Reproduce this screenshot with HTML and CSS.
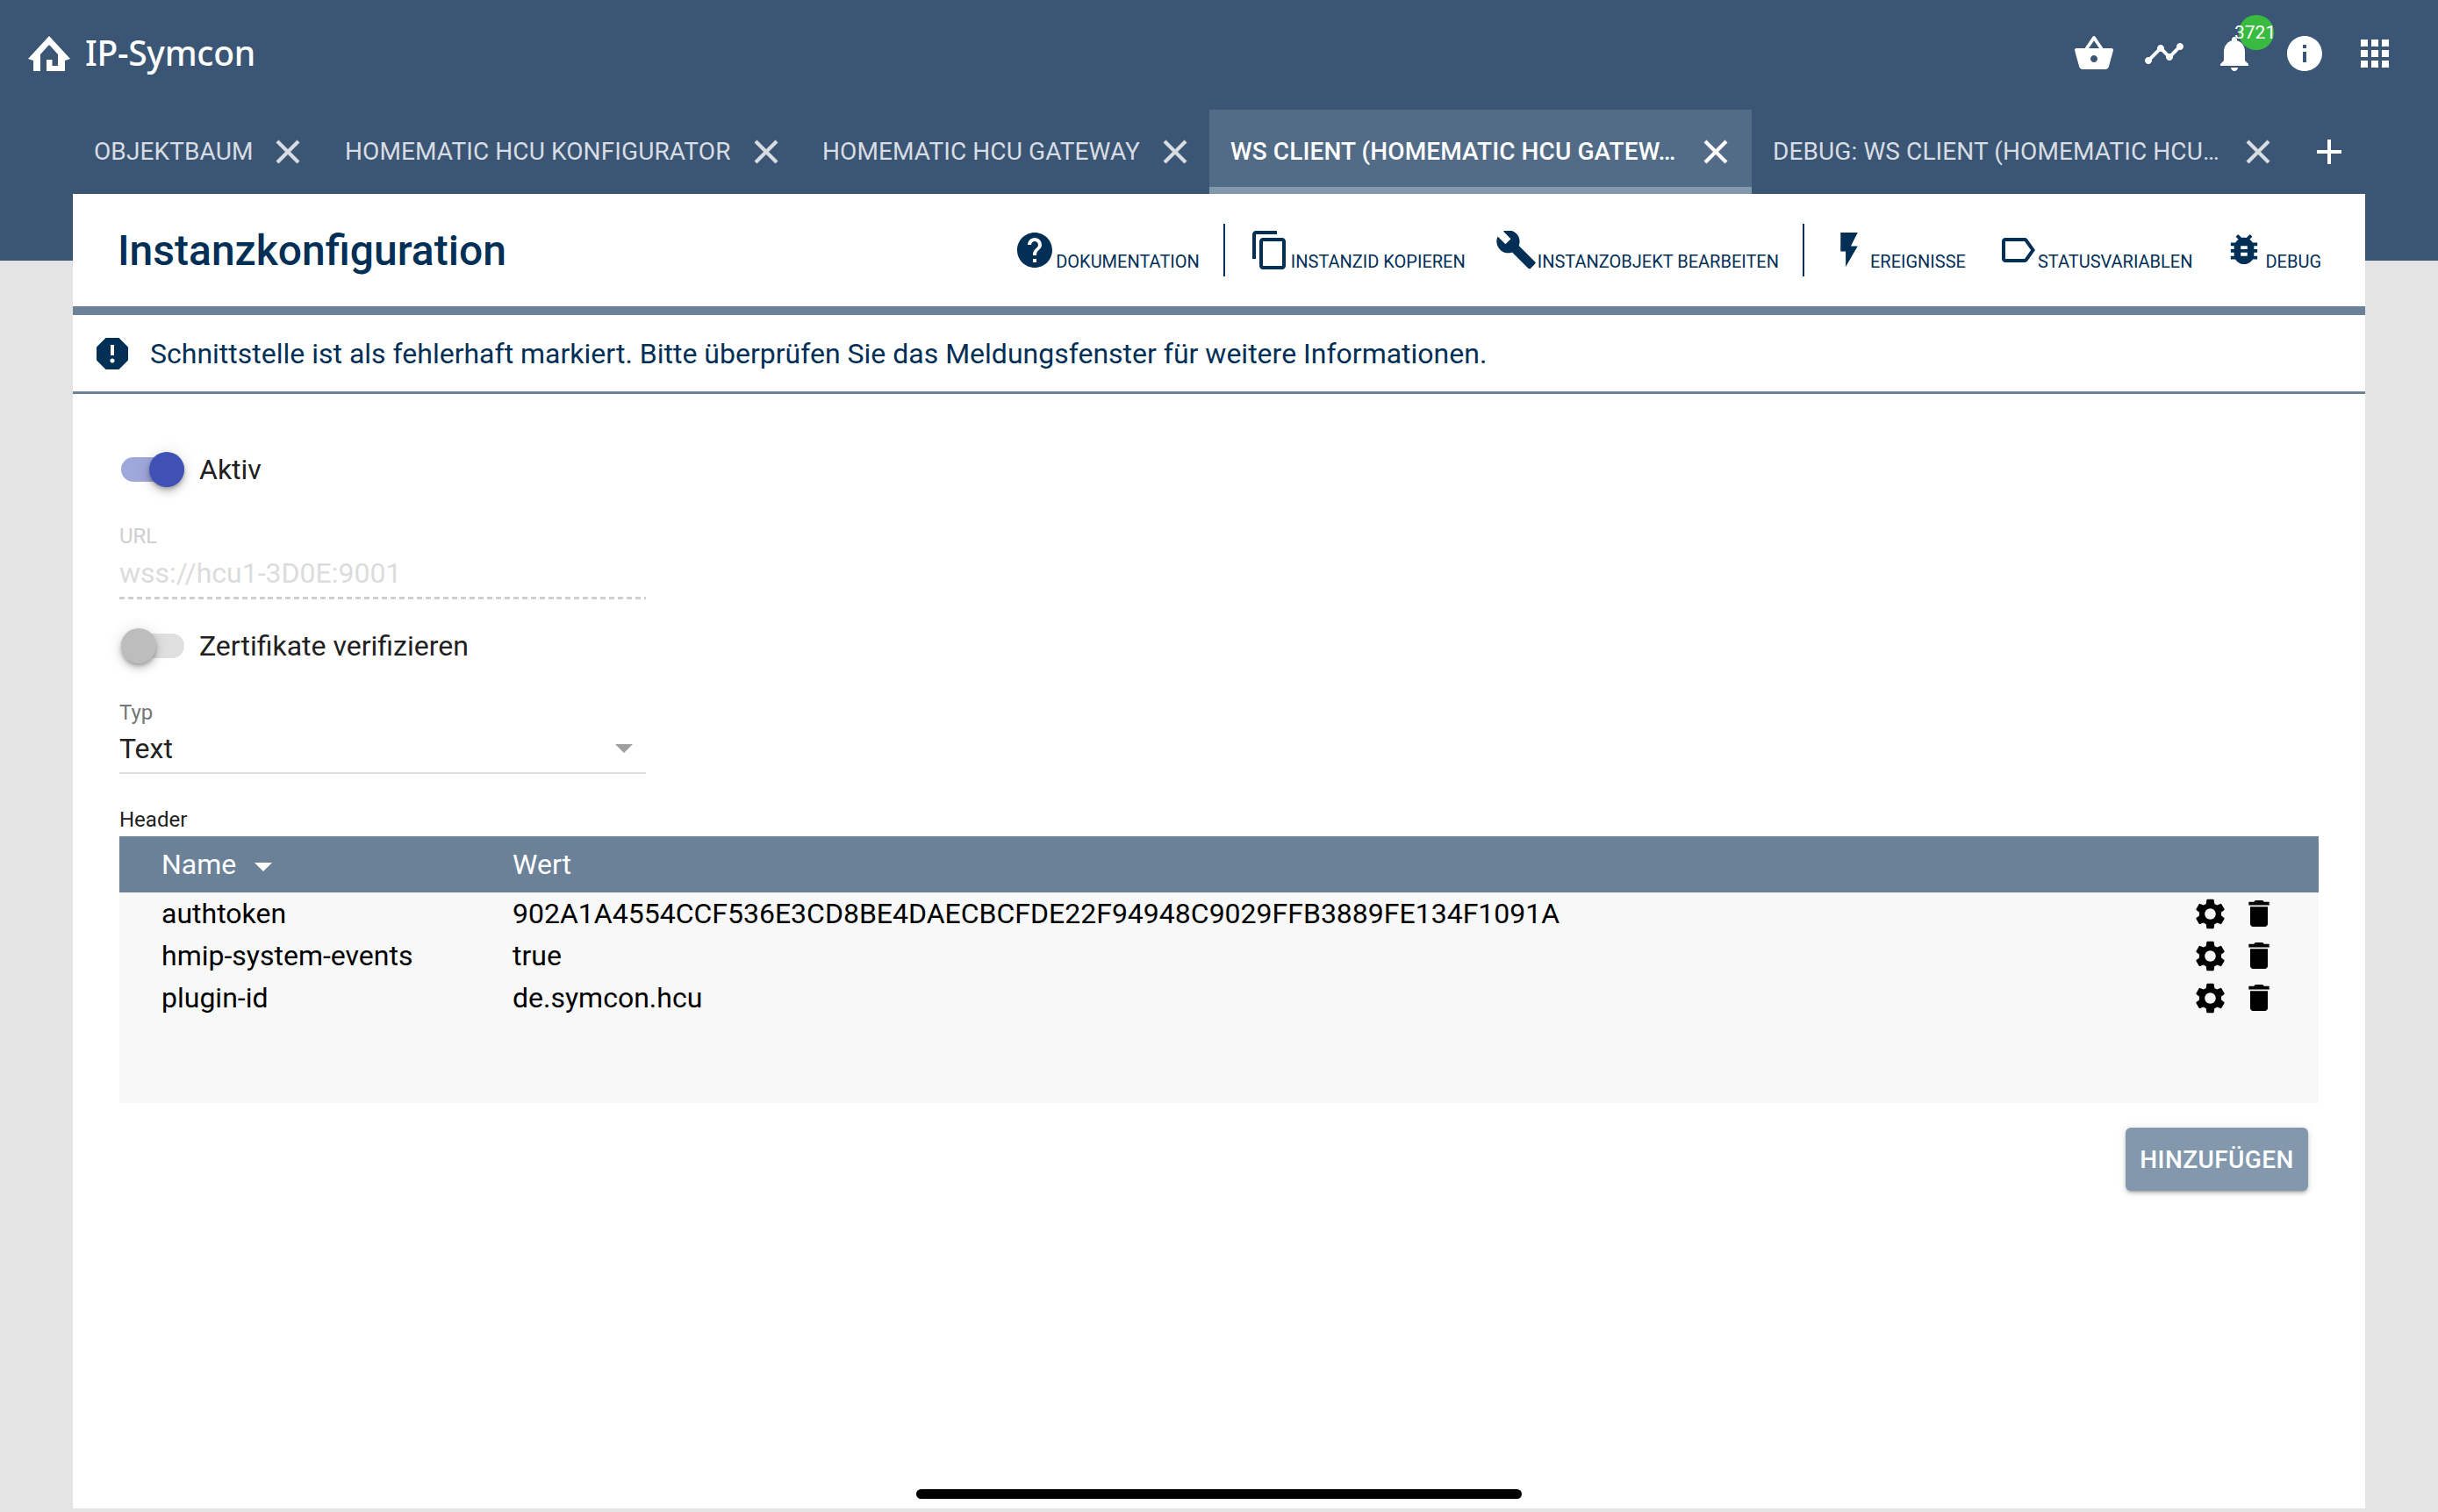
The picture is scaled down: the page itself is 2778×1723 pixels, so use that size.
FILE: index.html
```html
<!DOCTYPE html>
<html lang="de">
<head>
<meta charset="utf-8">
<title>IP-Symcon</title>
<link rel="stylesheet" href="styles.css">
</head>
<body>
<svg class="defs" width="0" height="0" aria-hidden="true">
  <symbol id="gear" viewBox="2.500 2 19 20"><path d="M19.140 12.940c.04-.3.060-.61.060-.94 0-.32-.02-.64-.07-.94l2.030-1.580c.18-.14.23-.41.120-.61l-1.920-3.320c-.12-.22-.37-.29-.59-.22l-2.390.96c-.5-.38-1.030-.7-1.620-.94l-.36-2.540c-.04-.24-.24-.41-.48-.41h-3.840c-.24 0-.43.17-.47.41l-.36 2.540c-.59.24-1.130.57-1.620.94l-2.390-.96c-.22-.08-.47 0-.59.22L2.740 8.870c-.12.21-.08.47.12.61l2.030 1.580c-.05.3-.09.63-.09.94s.02.64.07.94l-2.030 1.580c-.18.14-.23.41-.12.61l1.920 3.320c.12.22.37.29.59.22l2.390-.96c.5.38 1.030.7 1.620.94l.36 2.540c.05.24.24.41.48.41h3.840c.24 0 .44-.17.47-.41l.36-2.540c.59-.24 1.130-.56 1.620-.94l2.390.96c.22.08.47 0 .59-.22l1.920-3.320c.12-.22.07-.47-.12-.61l-2.010-1.580zM12 15.600c-1.980 0-3.600-1.620-3.600-3.600s1.620-3.600 3.600-3.600 3.600 1.620 3.600 3.600-1.620 3.600-3.600 3.600z"/></symbol>
  <symbol id="trash" viewBox="5 3 14 18"><path d="M6 19c0 1.100.9 2 2 2h8c1.100 0 2-.9 2-2V7.300H6v11.700zM19 4h-3.500l-1-1h-5l-1 1H5v2.300h14V4z"/></symbol>
  <symbol id="close" viewBox="0 0 28 28"><path d="M2 2 L26 26 M26 2 L2 26"/></symbol>
</svg>
<div class="band"></div>
<div class="app">
  <header class="topbar">
    <div class="brand">
      <svg class="logo" viewBox="0 0 48 40"><path fill="#fff" d="M24 0 L48 26 L42 28 V40 H21 V27 H27.500 V34 H34 V21 L24 10 L14 21 V40 H6 V28 L0 26 Z"/></svg>
      <span class="brand-name">IP-Symcon</span>
    </div>
    <div class="actions">
      <svg class="aicon" viewBox="0 0 24 24"><path fill="#fff" d="M22 9h-4.790l-4.380-6.560c-.19-.28-.51-.42-.83-.42s-.64.14-.83.43L6.790 9H2c-.55 0-1 .45-1 1 0 .09.01.18.04.27l2.540 9.270c.23.84 1 1.460 1.920 1.460h13c.92 0 1.690-.62 1.930-1.460l2.540-9.270L23 10c0-.55-.45-1-1-1zM9 9l3-4.400L15 9H9zm3 8c-1.100 0-2-.9-2-2s.9-2 2-2 2 .9 2 2-.9 2-2 2z"/></svg>
      <svg class="aicon" viewBox="0 0 24 24"><path fill="#fff" d="M23 8c0 1.100-.9 2-2 2-.18 0-.35-.02-.51-.07l-3.560 3.550c.05.16.07.34.07.52 0 1.100-.9 2-2 2s-2-.9-2-2c0-.18.02-.36.07-.52l-2.550-2.550c-.16.05-.34.07-.52.07s-.36-.02-.52-.07l-4.550 4.560c.05.16.07.33.07.51 0 1.100-.9 2-2 2s-2-.9-2-2 .9-2 2-2c.18 0 .35.02.51.07l4.560-4.550C8.020 9.360 8 9.180 8 9c0-1.100.9-2 2-2s2 .9 2 2c0 .18-.02.36-.07.52l2.550 2.550c.16-.05.34-.07.52-.07s.36.02.52.07l3.550-3.560C19.020 8.350 19 8.180 19 8c0-1.100.9-2 2-2s2 .9 2 2z"/></svg>
      <span class="bell">
        <svg class="aicon" viewBox="0 0 24 24"><path fill="#fff" d="M12 22c1.100 0 2-.9 2-2h-4c0 1.100.9 2 2 2zm6-6v-5c0-3.070-1.630-5.640-4.500-6.320V4c0-.83-.67-1.500-1.500-1.500s-1.500.67-1.500 1.500v.68C7.640 5.360 6 7.920 6 11v5l-2 2v1h16v-1l-2-2z"/></svg>
        <span class="badge">3721</span>
      </span>
      <svg class="aicon" viewBox="0 0 24 24"><path fill="#fff" d="M12 2C6.480 2 2 6.480 2 12s4.480 10 10 10 10-4.480 10-10S17.520 2 12 2zm1 15h-2v-6h2v6zm0-8h-2V7h2v2z"/></svg>
      <svg class="aicon" viewBox="0 0 24 24"><path fill="#fff" d="M4 8h4V4H4v4zm6 12h4v-4h-4v4zm-6 0h4v-4H4v4zm0-6h4v-4H4v4zm6 0h4v-4h-4v4zm6-10v4h4V4h-4zm-6 4h4V4h-4v4zm6 6h4v-4h-4v4zm0 6h4v-4h-4v4z"/></svg>
    </div>
  </header>

  <nav class="tabs">
    <div class="tab tab-first"><span class="tab-label">OBJEKTBAUM</span><svg class="x"><use href="#close"/></svg></div>
    <div class="tab tab-second"><span class="tab-label">HOMEMATIC HCU KONFIGURATOR</span><svg class="x"><use href="#close"/></svg></div>
    <div class="tab tab-third"><span class="tab-label">HOMEMATIC HCU GATEWAY</span><svg class="x"><use href="#close"/></svg></div>
    <div class="tab tab-active"><span class="tab-label tab-fixed">WS CLIENT (HOMEMATIC HCU GATEW…</span><svg class="x x-white"><use href="#close"/></svg></div>
    <div class="tab tab-last"><span class="tab-label tab-fixed">DEBUG: WS CLIENT (HOMEMATIC HCU…</span><svg class="x"><use href="#close"/></svg></div>
    <svg class="plus" viewBox="0 0 28 28"><path d="M14 0 V28 M0 14 H28"/></svg>
  </nav>

  <main class="panel">
    <div class="panel-head">
      <h1 class="title">Instanzkonfiguration</h1>
      <div class="tools">
        <div class="tool"><svg class="ticon t-help" viewBox="2 2 20 20"><path d="M12 2C6.480 2 2 6.480 2 12s4.480 10 10 10 10-4.480 10-10S17.520 2 12 2zm1 17h-2v-2h2v2zm2.070-7.750l-.9.920C13.450 12.900 13 13.500 13 15h-2v-.5c0-1.100.45-2.100 1.170-2.830l1.240-1.260c.37-.36.590-.86.590-1.410 0-1.100-.9-2-2-2s-2 .9-2 2H8c0-2.210 1.790-4 4-4s4 1.790 4 4c0 .88-.36 1.680-.93 2.250z"/></svg><span>DOKUMENTATION</span></div>
        <div class="sep sep-1"></div>
        <div class="tool"><svg class="ticon t-copy" viewBox="2 1 19 22"><path d="M16 1H4c-1.100 0-2 .9-2 2v14h2V3h12V1zm3 4H8c-1.100 0-2 .9-2 2v14c0 1.100.9 2 2 2h11c1.100 0 2-.9 2-2V7c0-1.100-.9-2-2-2zm0 16H8V7h11v14z"/></svg><span>INSTANZID KOPIEREN</span></div>
        <div class="tool tool-edit"><svg class="ticon t-wrench" viewBox="0.800 1.700 22.400 21.400"><path d="M22.700 19l-9.100-9.100c.9-2.300.4-5-1.500-6.900-2-2-5-2.400-7.400-1.300L9 6 6 9 1.600 4.700C.4 7.100.9 10.100 2.900 12.100c1.900 1.900 4.600 2.400 6.900 1.500l9.100 9.100c.4.4 1 .4 1.400 0l2.300-2.300c.5-.4.500-1.100.1-1.400z"/></svg><span>INSTANZOBJEKT BEARBEITEN</span></div>
        <div class="sep sep-2"></div>
        <div class="tool"><svg class="ticon t-bolt" viewBox="7 2 10 20"><path d="M7 2v11h3v9l7-12h-4l4-8z"/></svg><span>EREIGNISSE</span></div>
        <div class="tool tool-status"><svg class="ticon t-label" viewBox="3 5 19 14"><path d="M17.630 5.840C17.270 5.330 16.670 5 16 5L5 5.010C3.900 5.010 3 5.900 3 7v10c0 1.100.9 1.990 2 1.990L16 19c.67 0 1.270-.33 1.630-.84L22 12l-4.370-6.160zM16 17H5V7h11l3.550 5L16 17z"/></svg><span>STATUSVARIABLEN</span></div>
        <div class="tool tool-debug"><svg class="ticon t-bug" viewBox="4 3 16 19"><path d="M20 8h-2.810c-.45-.78-1.070-1.450-1.820-1.960L17 4.410 15.590 3l-2.170 2.170C12.960 5.060 12.490 5 12 5c-.49 0-.96.06-1.410.17L8.410 3 7 4.410l1.620 1.630C7.880 6.550 7.260 7.220 6.810 8H4v2h2.090c-.05.33-.09.66-.09 1v1H4v2h2v1c0 .34.04.67.09 1H4v2h2.810c1.040 1.790 2.970 3 5.190 3s4.150-1.210 5.190-3H20v-2h-2.090c.05-.33.09-.66.09-1v-1h2v-2h-2v-1c0-.34-.04-.67-.09-1H20V8zm-6 8h-4v-2h4v2zm0-4h-4v-2h4v2z"/></svg><span>DEBUG</span></div>
      </div>
    </div>
    <div class="alert">
      <svg class="alert-icon" viewBox="3 3 18 18"><path d="M15.730 3H8.270L3 8.270v7.460L8.270 21h7.460L21 15.730V8.270L15.730 3zM12 17.300c-.72 0-1.300-.58-1.300-1.300 0-.72.58-1.300 1.300-1.300.72 0 1.300.58 1.300 1.300 0 .72-.58 1.300-1.300 1.300zm1-4.300h-2V7h2v6z"/></svg>
      <span>Schnittstelle ist als fehlerhaft markiert. Bitte überprüfen Sie das Meldungsfenster für weitere Informationen.</span>
    </div>
    <section class="form">
      <div class="switch-row row-aktiv">
        <span class="switch on"><span class="knob"></span></span>
        <span class="switch-label">Aktiv</span>
      </div>
      <div class="field field-url">
        <div class="field-label disabled">URL</div>
        <div class="field-value disabled">wss://hcu1-3D0E:9001</div>
      </div>
      <div class="switch-row row-cert">
        <span class="switch off"><span class="knob"></span></span>
        <span class="switch-label">Zertifikate verifizieren</span>
      </div>
      <div class="field field-typ">
        <div class="field-label">Typ</div>
        <div class="field-value select-value"><span>Text</span><span class="caret"></span></div>
      </div>
      <div class="table-label">Header</div>
      <div class="table">
        <div class="thead">
          <div class="col-name">Name<span class="sort"></span></div>
          <div class="col-val">Wert</div>
        </div>
        <div class="tbody">
          <div class="tr">
            <div class="col-name">authtoken</div>
            <div class="col-val">902A1A4554CCF536E3CD8BE4DAECBCFDE22F94948C9029FFB3889FE134F1091A</div>
            <div class="col-act"><svg class="ic-gear"><use href="#gear"/></svg><svg class="ic-trash"><use href="#trash"/></svg></div>
          </div>
          <div class="tr">
            <div class="col-name">hmip-system-events</div>
            <div class="col-val">true</div>
            <div class="col-act"><svg class="ic-gear"><use href="#gear"/></svg><svg class="ic-trash"><use href="#trash"/></svg></div>
          </div>
          <div class="tr">
            <div class="col-name">plugin-id</div>
            <div class="col-val">de.symcon.hcu</div>
            <div class="col-act"><svg class="ic-gear"><use href="#gear"/></svg><svg class="ic-trash"><use href="#trash"/></svg></div>
          </div>
        </div>
      </div>
      <div class="button-row"><button class="btn">HINZUFÜGEN</button></div>
    </section>
  </main>
</div>
<div class="home-bar"></div>
</body>
</html>
```

FILE: styles.css
```css
* { box-sizing: border-box; }
html, body { margin: 0; padding: 0; }
body {
  width: 2778px;
  height: 1723px;
  overflow: hidden;
  position: relative;
  background: #e4e4e4;
  font-family: Roboto, "Liberation Sans", sans-serif;
}
.defs { position: absolute; }
.band {
  position: absolute;
  left: 0; top: 0; right: 0;
  height: 297px;
  background: #3a5674;
}
.app {
  position: relative;
  display: flex;
  flex-direction: column;
  height: 1719px;
}
.topbar {
  height: 125px;
  display: flex;
  align-items: center;
  justify-content: space-between;
  padding: 0 48px 3px 32px;
}
.brand { display: flex; align-items: center; gap: 17px; }
.logo { width: 48px; height: 40px; display: block; }
.brand-name {
  font-family: "Noto Sans", sans-serif;
  font-size: 39px;
  font-weight: 500;
  letter-spacing: -0.3px;
  line-height: 46px;
  margin-bottom: 2px;
  color: #fff;
}
.actions { display: flex; align-items: center; gap: 32px; }
.aicon { width: 48px; height: 48px; display: block; }
.bell { position: relative; display: block; }
.badge {
  position: absolute;
  left: 29px; top: -20px;
  width: 40px; height: 40px;
  border-radius: 50%;
  background: #39bb41;
  color: #fff;
  font-size: 21px;
  line-height: 40px;
  text-indent: -5px;
  white-space: nowrap;
}
.tabs {
  height: 96px;
  display: flex;
  align-items: stretch;
  padding-left: 83px;
}
.tab {
  display: flex;
  align-items: center;
  padding-left: 24px;
  color: #d9dde3;
  font-size: 28px;
  letter-spacing: .1px;
  white-space: nowrap;
}
.tab-label { display: block; margin-bottom: 2px; }
.tab-fixed { width: 512px; }
.x { width: 28px; height: 28px; flex: none; margin-left: 26px; }
.x use { stroke: #d9dde3; stroke-width: 4.200; fill: none; }
.x-white use { stroke: #fff; }
.tab-first { width: 286px; }
.tab-second { width: 544px; }
.tab-third { width: 465px; }
.tab-active {
  width: 618px;
  background: #526b87;
  color: #fff;
  font-weight: 500;
  border-bottom: 8px solid #8298ad;
  padding-top: 8px;
}
.tab-active .x, .tab-last .x { margin-left: 27px; }
.tab-last { width: 618px; }
.plus { width: 28px; height: 28px; align-self: center; margin-left: 26px; }
.plus path { stroke: #fff; stroke-width: 4; fill: none; }

.panel {
  margin: 0 83px;
  flex: 1;
  background: #fff;
  display: flex;
  flex-direction: column;
}
.panel-head {
  height: 138px;
  border-bottom: 10px solid #6b8198;
  display: flex;
  align-items: flex-start;
  justify-content: space-between;
  padding: 0 50px 0 51px;
}
.title {
  margin: 36px 0 0;
  font-size: 48px;
  font-weight: 500;
  line-height: 58px;
  color: #022f56;
}
.tools { display: flex; align-items: flex-start; padding-top: 42px; }
.tool {
  display: flex;
  align-items: flex-end;
  height: 47px;
  color: #022f56;
  font-size: 20px;
  line-height: 24px;
  white-space: nowrap;
}
.tool span { display: block; }
.ticon { fill: #022f56; display: block; flex: none; }
.t-help { width: 40px; height: 40px; margin-right: 4px; margin-bottom: 5px; }
.t-copy { width: 38px; height: 44px; margin-right: 6px; margin-bottom: 3px; }
.t-wrench { width: 45px; height: 44px; margin-right: 2px; margin-bottom: 3px; }
.t-bolt { width: 20px; height: 39px; margin-right: 14px; margin-bottom: 6px; }
.t-label { width: 38px; height: 28px; margin-right: 3px; margin-bottom: 11px; }
.t-bug { width: 32px; height: 36px; margin-right: 8px; margin-bottom: 7px; }
.sep { width: 2px; height: 60px; background: #022f56; }
.sep-1 { margin: -8px 31px 0 27px; }
.sep-2 { margin: -8px 41px 0 27px; }
.tool-edit { margin-left: 35px; }
.tool-status { margin-left: 41px; }
.tool-debug { margin-left: 43px; }

.alert {
  height: 90px;
  border-bottom: 3px solid #6b8198;
  display: flex;
  align-items: center;
  gap: 25px;
  padding: 0 0 0 27px;
  color: #022f56;
  font-size: 32px;
  line-height: 40px;
}
.alert-icon { width: 36px; height: 36px; fill: #022f56; flex: none; }

.form { padding: 0 53px; display: flex; flex-direction: column; }
.switch-row { display: flex; align-items: center; height: 48px; }
.row-aktiv { margin-top: 62px; }
.row-cert { margin-top: 29px; }
.switch {
  position: relative;
  width: 72px;
  height: 28px;
  border-radius: 14px;
  margin-left: 2px;
  flex: none;
}
.switch.on { background: #9fa8da; }
.switch.off { background: #e0e0e0; }
.knob {
  position: absolute;
  top: -6px;
  width: 40px;
  height: 40px;
  border-radius: 50%;
  box-shadow: 0 3px 5px -1px rgba(0,0,0,.3), 0 6px 10px rgba(0,0,0,.14), 0 1px 18px rgba(0,0,0,.12);
}
.on .knob { left: 32px; background: #3f51b5; }
.off .knob { left: 0; background: #bdbdbd; }
.switch-label { margin-left: 17px; font-size: 32px; color: #212121; }

.field { width: 600px; }
.field-url { margin-top: 38px; }
.field-typ { margin-top: 38px; }
.field-label { font-size: 24px; line-height: 28px; color: #757575; }
.field-label.disabled { color: #cfcfcf; }
.field-value {
  font-size: 32px;
  line-height: 44px;
  height: 56px;
  padding-top: 6px;
  color: #212121;
}
.field-value.disabled {
  color: #dcdcdc;
  height: 58px;
  background: repeating-linear-gradient(90deg, #cfcfcf 0 6px, transparent 6px 9.970px) bottom / 100% 3px no-repeat;
}
.select-value {
  display: flex;
  align-items: center;
  justify-content: space-between;
  border-bottom: 2px solid #e0e0e0;
  padding-right: 15px;
  padding-top: 0;
}
.caret {
  width: 0; height: 0;
  border-left: 10px solid transparent;
  border-right: 10px solid transparent;
  border-top: 10px solid #9e9e9e;
}
.table-label { margin-top: 38px; font-size: 24px; line-height: 28px; color: #212121; }
.table { margin-top: 5px; width: 2506px; }
.thead {
  height: 64px;
  background: #6b8198;
  display: flex;
  align-items: center;
  color: #fff;
  font-size: 32px;
}
.col-name { width: 448px; padding-left: 48px; flex: none; }
.col-val { flex: 1; }
.sort {
  display: inline-block;
  width: 0; height: 0;
  margin-left: 21px;
  vertical-align: 3px;
  border-left: 10px solid transparent;
  border-right: 10px solid transparent;
  border-top: 10px solid #fff;
}
.tbody {
  height: 240px;
  background: #f8f8f8;
}
.tr {
  height: 48px;
  display: flex;
  align-items: center;
  font-size: 32px;
  color: #000;
}
.col-act { display: flex; align-items: center; gap: 27px; padding-right: 56px; }
.ic-gear { width: 33px; height: 35px; display: block; }
.ic-trash { width: 24px; height: 30px; display: block; }
.button-row { display: flex; justify-content: flex-end; width: 2506px; padding-right: 12px; margin-top: 28px; }
.btn {
  width: 208px;
  height: 72px;
  border: 0;
  border-radius: 6px;
  background: #8398ad;
  color: #fff;
  font-family: inherit;
  font-size: 28px;
  font-weight: 500;
  letter-spacing: .4px;
  box-shadow: 0 3px 3px -2px rgba(0,0,0,.2), 0 3px 4px rgba(0,0,0,.14), 0 1px 8px rgba(0,0,0,.12);
}
.home-bar {
  position: absolute;
  left: 1044px;
  top: 1697px;
  width: 690px;
  height: 11px;
  border-radius: 6px;
  background: #000;
}
```
